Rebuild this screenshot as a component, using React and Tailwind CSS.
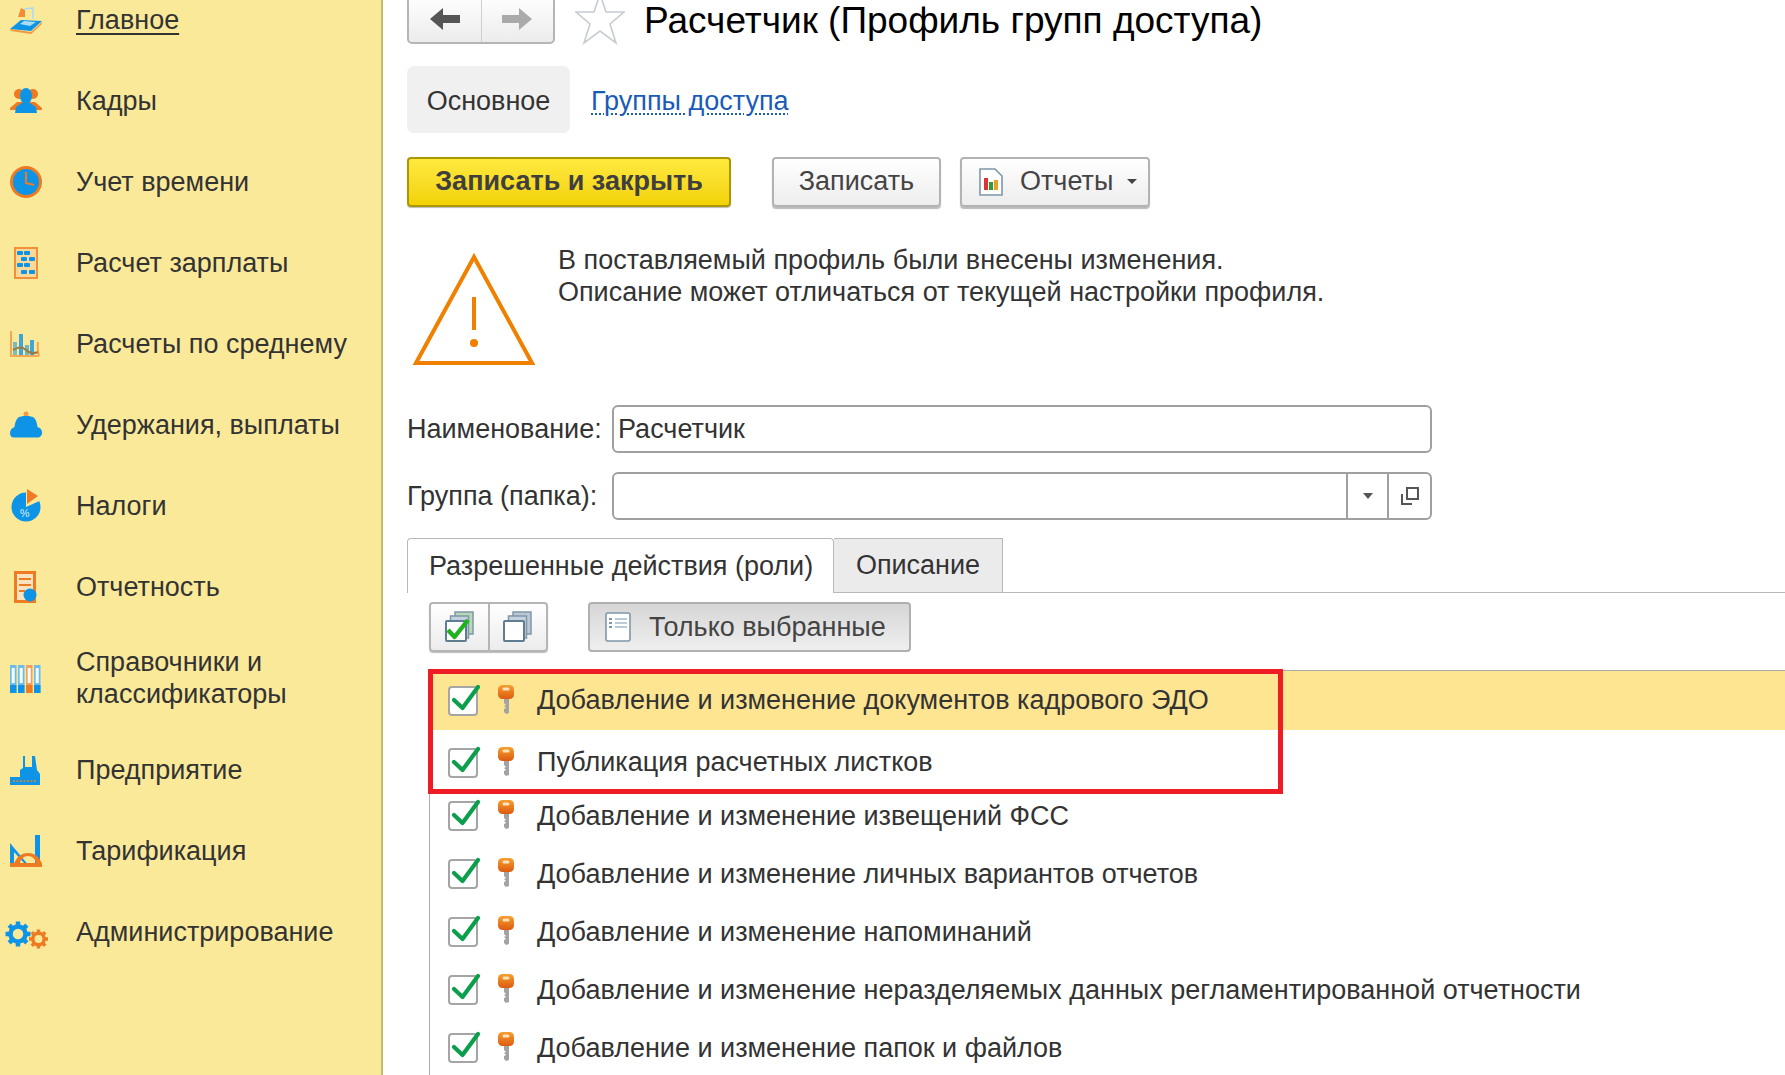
import React from "react";

const BLUE = "#0e94e6";
const ORANGE = "#ee7b22";
const LIGHT = "#a9dcf3";
const SIDE = "#fbe99a";

function HomeIcon() {
  return (
    <>
      <path d="M8 13 L11 4 L15 6 L15 13 Z" fill={ORANGE} opacity=".85" />
      <path d="M14 5 L23 4 L23 15" fill="none" stroke={LIGHT} strokeWidth="1.6" />
      <path d="M0 25 L11 16 L32 17 L21 27 Z" fill={BLUE} />
      <path d="M10 20 L14 17 L26 18 L20 22 Z" fill={LIGHT} />
      <path d="M0 25 L21 28 L32 18 L32 20 L21 30 L1 27 Z" fill={ORANGE} opacity=".75" />
    </>
  );
}

function PeopleIcon() {
  return (
    <>
      <circle cx="9" cy="9" r="5" fill={ORANGE} />
      <circle cx="23" cy="9" r="5" fill={ORANGE} />
      <path d="M0 23 L7 17 L25 17 L32 23 L32 25 L0 25 Z" fill={ORANGE} />
      <ellipse cx="16" cy="11" rx="6" ry="8" fill={BLUE} />
      <path d="M5 28 L6 22 L12 18 L20 18 L26 22 L27 28 Z" fill={BLUE} />
    </>
  );
}

function ClockIcon() {
  return (
    <>
      <circle cx="16" cy="16" r="16" fill={ORANGE} />
      <circle cx="16" cy="16" r="13" fill={BLUE} />
      <path d="M16 6 L16 17 L24 19" fill="none" stroke={ORANGE} strokeWidth="2" />
    </>
  );
}

function AbacusIcon() {
  return (
    <>
      <rect x="5" y="1" width="22" height="30" fill="#f8d59a" stroke={ORANGE} strokeWidth="2" opacity=".8" />
      {[6, 12, 18, 25].map((y, i) => (
        <g key={y}>
          <rect x={i % 2 ? 11 : 7} y={y - 2} width="6" height="4" rx="1" fill={BLUE} />
          <rect x={i % 2 ? 19 : 14} y={y - 2} width="6" height="4" rx="1" fill={BLUE} />
        </g>
      ))}
    </>
  );
}

function ChartIcon() {
  return (
    <>
      <rect x="3" y="14" width="4" height="13" fill={BLUE} opacity=".55" />
      <rect x="9" y="6" width="4" height="21" fill={BLUE} opacity=".8" />
      <rect x="15" y="17" width="4" height="10" fill={BLUE} opacity=".6" />
      <rect x="20" y="12" width="4" height="15" fill={BLUE} opacity=".8" />
      <path d="M3 22 Q11 17 16 22 T28 24" fill="none" stroke="#9a7a45" strokeWidth="2" />
      <path d="M1 3 L1 28 L29 28 M29 28 Q27 20 28 14" fill="none" stroke={ORANGE} strokeWidth="2" opacity=".6" />
    </>
  );
}

function PurseIcon() {
  return (
    <>
      <circle cx="16" cy="5" r="2.5" fill={ORANGE} opacity=".7" />
      <path d="M9 8 C12 6.5 20 6.5 23 8 C26 10 27 14 27.5 18 C31 19 32.5 22 32 25 C31 28 29 28.5 27 28.5 L4 28.5 C1.5 28.5 0 27 0 24 C0 21 2 19 4.5 18 C5 14 6 10 9 8 Z" fill={BLUE} />
    </>
  );
}

function PieIcon() {
  return (
    <>
      <circle cx="16" cy="17" r="14.5" fill={BLUE} />
      <path d="M16 17 L16 -1 L34 -1 L34 9 Z" fill={SIDE} />
      <path d="M17 -1 L28 6 L17 14 Z" fill={ORANGE} />
      <text x="10" y="27" fontSize="11" fill={LIGHT} fontFamily="Liberation Sans" fontWeight="700">%</text>
    </>
  );
}

function ReportIcon() {
  return (
    <>
      <rect x="4" y="0" width="22" height="32" fill={ORANGE} />
      <rect x="7" y="3" width="16" height="26" fill="#fbe3c0" />
      <path d="M9 8 L21 8 M9 14 L21 14 M9 20 L15 20" stroke={ORANGE} strokeWidth="2" />
      <circle cx="20" cy="24" r="6.5" fill={BLUE} />
    </>
  );
}

function BindersIcon() {
  return (
    <>
      {[0, 8, 16, 24].map((x, i) => (
        <g key={x}>
          <rect x={x} y="3" width="6.5" height="28" fill={i === 2 ? "#f1a263" : "#6dbce9"} />
          <rect x={x + 1.7} y="6" width="3" height="15" fill="#f5fbff" />
          <rect x={x} y="23" width="6.5" height="8" fill={i === 2 ? ORANGE : BLUE} />
        </g>
      ))}
    </>
  );
}

function FactoryIcon() {
  return (
    <>
      <path d="M13 2 L15 2 L15 13 L22 13 L22 2 L25 2 L27 16 L30 20 L30 31 L0 31 L0 23 L10 23 L10 16 L13 14 Z" fill={BLUE} />
      <path d="M3 27 L26 27" stroke="#b28a55" strokeWidth="2" strokeDasharray="2 1.5" />
    </>
  );
}

function TarifIcon() {
  return (
    <>
      <path d="M0 8 L0 32 L20 32 Z M4 17 L4 28 L14 28 Z" fill={BLUE} fillRule="evenodd" />
      <rect x="25" y="0" width="5" height="30" fill={BLUE} />
      <path d="M4 32 A14 14 0 0 1 32 32 Z M10 29 L26 29 A8 8 0 0 0 10 29 Z" fill={ORANGE} fillRule="evenodd" />
      <rect x="0" y="28" width="32" height="4" fill={ORANGE} />
    </>
  );
}

function Gear({ cx, cy, r, color, width }) {
  return (
    <g>
      {[0, 45, 90, 135].map((a) => (
        <rect key={a} x={cx - width / 2} y={cy - r} width={width} height={2 * r} fill={color} transform={`rotate(${a} ${cx} ${cy})`} />
      ))}
      <circle cx={cx} cy={cy} r={r * 0.78} fill={color} />
      <circle cx={cx} cy={cy} r={r * 0.42} fill={SIDE} />
    </g>
  );
}

function GearsIcon() {
  return (
    <>
      <Gear cx={8} cy={18} r={12.5} color={BLUE} width={4.5} />
      <Gear cx={28.5} cy={23} r={9.5} color={ORANGE} width={3.5} />
    </>
  );
}

const menu = [
  { label: "Главное", icon: <HomeIcon />, active: true },
  { label: "Кадры", icon: <PeopleIcon /> },
  { label: "Учет времени", icon: <ClockIcon /> },
  { label: "Расчет зарплаты", icon: <AbacusIcon /> },
  { label: "Расчеты по среднему", icon: <ChartIcon /> },
  { label: "Удержания, выплаты", icon: <PurseIcon /> },
  { label: "Налоги", icon: <PieIcon /> },
  { label: "Отчетность", icon: <ReportIcon /> },
  { label: "Справочники и классификаторы", icon: <BindersIcon />, tall: true },
  { label: "Предприятие", icon: <FactoryIcon /> },
  { label: "Тарификация", icon: <TarifIcon /> },
  { label: "Администрирование", icon: <GearsIcon /> },
];

const roles = [
  { text: "Добавление и изменение документов кадрового ЭДО", cls: "h-[59px] bg-[#fee591]" },
  { text: "Публикация расчетных листков", cls: "h-[65px]" },
  { text: "Добавление и изменение извещений ФСС", cls: "h-[50px] pb-[8px]" },
  { text: "Добавление и изменение личных вариантов отчетов", cls: "h-[58px]" },
  { text: "Добавление и изменение напоминаний", cls: "h-[58px]" },
  { text: "Добавление и изменение неразделяемых данных регламентированной отчетности", cls: "h-[58px]" },
  { text: "Добавление и изменение папок и файлов", cls: "h-[58px]" },
];

function KeyIcon() {
  return (
    <svg width="18" height="30" viewBox="0 0 18 30" className="shrink-0">
      <defs>
        <linearGradient id="keyHead" x1="0" y1="0" x2="0" y2="1">
          <stop offset="0" stopColor="#f5a030" />
          <stop offset="1" stopColor="#dd5a10" />
        </linearGradient>
      </defs>
      <path d="M7 12 L12 12 L12 28 L9 29 L7 27 L7 24 L9 23 L7 21 L9 20 L7 18 Z" fill="#a3a3a3" />
      <rect x="1" y="0" width="16" height="14" rx="4.5" fill="url(#keyHead)" />
      <rect x="5.5" y="2.5" width="7" height="3" rx="1.5" fill="#fbe2b8" />
    </svg>
  );
}

function Check() {
  return (
    <span className="relative w-[30px] h-[30px] shrink-0 rounded-[4px] border-2 border-[#a5a5a5] bg-white">
      <svg width="38" height="38" viewBox="0 0 38 38" className="absolute -left-[2px] -top-[6px]">
        <path d="M6 18 L14.5 26 L30 5" fill="none" stroke="#0b9f4c" strokeWidth="4.2" strokeLinecap="round" strokeLinejoin="round" />
      </svg>
    </span>
  );
}

function Sheets({ checked }) {
  return (
    <svg width="32" height="32" viewBox="0 0 32 32">
      <rect x="11" y="1" width="18" height="22" fill={checked ? "#b7d9b4" : "#b9c8d4"} stroke="#7f97a8" strokeWidth="1.5" />
      <rect x="6.5" y="5" width="18" height="22" fill="#c4d2dd" stroke="#7f97a8" strokeWidth="1.5" />
      <rect x="2" y="10" width="20" height="20" fill="#fff" stroke="#5f7c90" strokeWidth="2" rx="1" />
      {checked && (
        <path d="M4 19 L10.5 26 L24 9" fill="none" stroke="#1fb31f" strokeWidth="4.4" strokeLinejoin="round" />
      )}
    </svg>
  );
}

export default function App() {
  return (
    <div className="flex w-[1785px] h-[1075px] overflow-hidden bg-white font-['Liberation_Sans',Arial,sans-serif] text-[27px] text-[#333]">
      <aside className="w-[383px] shrink-0 bg-[#fbe99a] border-r-2 border-[#c4bb72]">
        <nav className="-mt-[21px]">
          {menu.map((m) => (
            <div key={m.label} className={`flex items-center ${m.tall ? "h-[102px]" : "h-[81px]"}`}>
              <div className="w-[76px] shrink-0 pl-[10px]">
                <svg width="32" height="32" viewBox="0 0 32 32" className="overflow-visible blur-[0.5px]">
                  {m.icon}
                </svg>
              </div>
              <span className={`leading-[32px] w-[290px] ${m.active ? "underline underline-offset-[4px]" : ""}`}>{m.label}</span>
            </div>
          ))}
        </nav>
      </aside>

      <main className="flex-1 min-w-0 pl-[24px] relative">
        <div className="flex items-center -mt-[7px] h-[51px]">
          <div className="flex w-[148px] h-[51px] rounded-[5px] border-2 border-[#b5b5b5] bg-gradient-to-b from-white to-[#ececec]">
            <div className="flex-1 flex items-center justify-center border-r border-[#cfcfcf]">
              <svg width="30" height="24" viewBox="0 0 30 24"><path d="M0 12 L13 1 L13 8 L30 8 L30 16 L13 16 L13 23 Z" fill="#555" /></svg>
            </div>
            <div className="flex-1 flex items-center justify-center">
              <svg width="30" height="24" viewBox="0 0 30 24"><path d="M30 12 L17 1 L17 8 L0 8 L0 16 L17 16 L17 23 Z" fill="#aaa" /></svg>
            </div>
          </div>
          <svg width="50" height="52" viewBox="0 0 50 52" className="ml-[20px] shrink-0">
            <path d="M25 1 L31 19 L49 19 L35 31 L41 50 L25 38 L9 50 L15 31 L1 19 L19 19 Z" fill="#fff" stroke="#c6ccd1" strokeWidth="1.6" />
          </svg>
          <h1 className="ml-[19px] mt-[5px] text-[37px] font-normal text-black whitespace-nowrap">Расчетчик (Профиль групп доступа)</h1>
        </div>

        <div className="flex items-center mt-[22px]">
          <div className="w-[163px] h-[67px] flex items-center justify-center pt-[3px] rounded-[7px] bg-[#f0f0f0]">Основное</div>
          <a className="ml-[21px] mt-[3px] text-[#1b5bb8] underline decoration-dotted decoration-2 underline-offset-[4px]">Группы доступа</a>
        </div>

        <div className="flex items-center mt-[23px] h-[51px]">
          <button className="w-[324px] h-[50px] rounded-[4px] border-2 border-[#ab9700] bg-gradient-to-b from-[#ffe93c] to-[#f2d200] font-bold text-[#3f3f3f] shadow-[0_1px_1px_#bbb]">Записать и закрыть</button>
          <button className="ml-[41px] w-[169px] h-[50px] rounded-[4px] border-2 border-[#b3b3b3] bg-gradient-to-b from-white to-[#ededed] text-[#444] shadow-[0_2px_1px_#bbb]">Записать</button>
          <button className="ml-[19px] w-[190px] h-[50px] flex items-center rounded-[4px] border-2 border-[#b3b3b3] bg-gradient-to-b from-white to-[#ededed] text-[#444] shadow-[0_2px_1px_#bbb]">
            <svg width="24" height="28" viewBox="0 0 24 28" className="ml-[17px] shrink-0">
              <path d="M1 1 L16 1 L23 8 L23 27 L1 27 Z" fill="#fff" stroke="#7f97a8" strokeWidth="1.6" />
              <rect x="5" y="10" width="4" height="12" fill="#d33" />
              <rect x="10" y="14" width="4" height="8" fill="#2a9d3a" />
              <rect x="15" y="12" width="4" height="10" fill="#e8a020" />
            </svg>
            <span className="ml-[17px]">Отчеты</span>
            <span className="ml-[14px] w-0 h-0 border-x-[5px] border-x-transparent border-t-[5px] border-t-[#444]"></span>
          </button>
        </div>

        <div className="flex mt-[46px] h-[112px]">
          <svg width="122" height="113" viewBox="0 0 122 113" className="ml-[6px] shrink-0">
            <path d="M61 4 L119 110 L3 110 Z" fill="none" stroke="#f08000" strokeWidth="4" />
            <rect x="59" y="44" width="4" height="33" fill="#f08000" />
            <circle cx="61" cy="90" r="4" fill="#f08000" />
          </svg>
          <p className="ml-[23px] leading-[32px] -mt-[9px] whitespace-nowrap">
            В поставляемый профиль были внесены изменения.<br />
            Описание может отличаться от текущей настройки профиля.
          </p>
        </div>

        <div className="flex items-center mt-[40px]">
          <label className="w-[205px] shrink-0">Наименование:</label>
          <div className="w-[820px] h-[48px] flex items-center pl-[4px] rounded-[6px] border-2 border-[#a0a0a0]">Расчетчик</div>
        </div>

        <div className="flex items-center mt-[19px]">
          <label className="w-[205px] shrink-0">Группа (папка):</label>
          <div className="w-[820px] h-[48px] flex justify-end rounded-[6px] border-2 border-[#a0a0a0]">
            <div className="w-[41px] flex items-center justify-center border-l-2 border-[#a0a0a0]">
              <span className="w-0 h-0 border-x-[5px] border-x-transparent border-t-[6px] border-t-[#555]"></span>
            </div>
            <div className="w-[43px] flex items-center justify-center border-l-2 border-[#a0a0a0]">
              <svg width="18" height="18" viewBox="0 0 18 18" fill="none" stroke="#555" strokeWidth="2">
                <rect x="6" y="1" width="11" height="11" />
                <path d="M1 7 L1 17 L11 17" />
              </svg>
            </div>
          </div>
        </div>

        <div className="flex items-stretch mt-[18px] h-[55px]">
          <div className="w-[427px] flex items-center pl-[21px] rounded-t-[4px] border border-b-0 border-[#b8b8b8]">Разрешенные действия (роли)</div>
          <div className="w-[169px] flex items-center justify-center border border-l-0 border-[#b8b8b8] bg-[#ebebeb]">Описание</div>
          <div className="flex-1 border-b border-[#b8b8b8]"></div>
        </div>

        <div className="flex items-center mt-[9px] ml-[22px] h-[50px]">
          <div className="flex w-[119px] h-[50px] rounded-[4px] border-2 border-[#b5b5b5] bg-gradient-to-b from-white to-[#ececec] shadow-[0_1px_1px_#bbb]">
            <div className="w-[59px] flex items-center justify-center border-r-2 border-[#b5b5b5]"><Sheets checked /></div>
            <div className="flex-1 flex items-center justify-center"><Sheets /></div>
          </div>
          <div className="ml-[40px] w-[323px] h-[50px] flex items-center rounded-[4px] border-2 border-[#b0b0b0] bg-gradient-to-b from-[#d6d6d6] to-[#efefef] text-[#444]">
            <svg width="26" height="30" viewBox="0 0 26 30" className="ml-[15px] shrink-0">
              <rect x="1" y="1" width="24" height="28" rx="2" fill="#fff" stroke="#7f97a8" strokeWidth="1.6" />
              <path d="M10 7 L22 7 M10 11 L22 11 M10 15 L22 15" stroke="#b9cbd8" strokeWidth="2" />
              <path d="M4 7 L7 7 M4 11 L7 11 M4 15 L7 15" stroke="#7f97a8" strokeWidth="2" />
            </svg>
            <span className="ml-[18px]">Только выбранные</span>
          </div>
        </div>

        <div className="mt-[18px] ml-[22px] border-l border-t border-[#ababab]">
          {roles.map((r) => (
            <div key={r.text} className={`flex items-center pl-[18px] whitespace-nowrap ${r.cls}`}>
              <Check />
              <span className="ml-[19px] mr-[22px] -mt-[2px]"><KeyIcon /></span>
              <span>{r.text}</span>
            </div>
          ))}
        </div>

        <div className="absolute left-[45px] top-[669px] w-[855px] h-[125px] border-[5px] border-[#ee1c25]"></div>
      </main>
    </div>
  );
}
